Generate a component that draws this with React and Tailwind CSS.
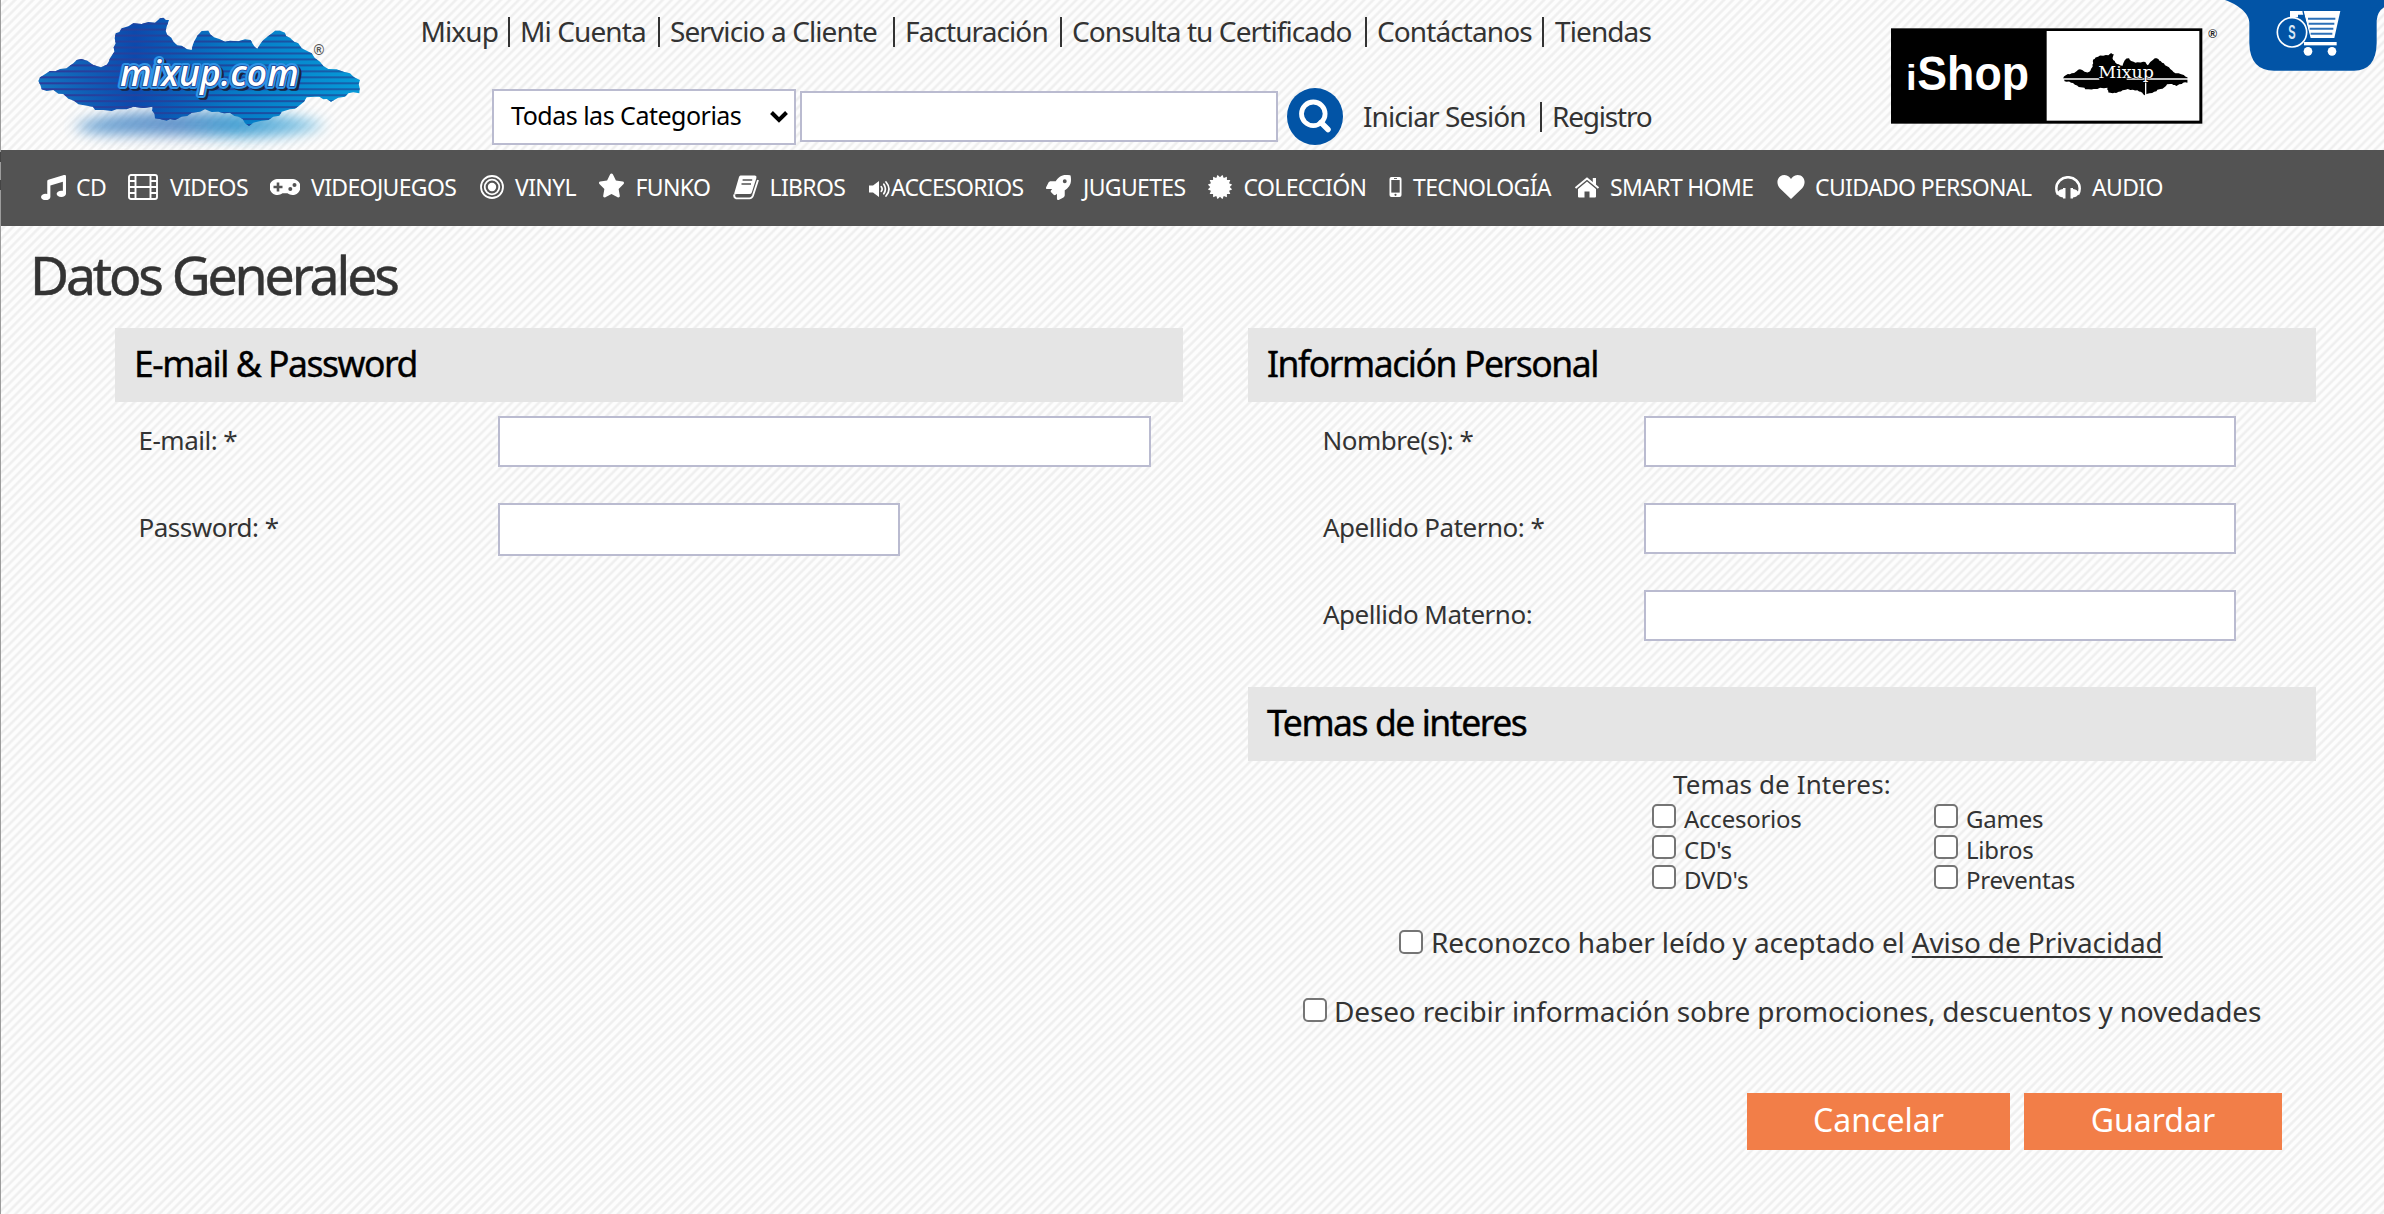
import React from "react";
import { FaRocket, FaStar, FaMusic } from "react-icons/fa";

const CLOUD =
  "M115 243 L120 232 131 225 150 213 166 214 180 207 199 205 220 190 230 180 244 177 262 182 280 195 303 202 320 194 326 185 330 175 343 155 341 142 347 130 344 115 347 100 358 96 365 85 385 79 400 70 425 72 445 66 465 68 480 55 490 53 498 60 507 60 500 80 497 92 502 105 514 113 520 125 532 136 545 137 560 147 575 150 579 133 585 120 592 107 605 93 625 92 632 104 642 112 660 118 675 125 690 122 715 124 735 118 752 120 757 130 765 142 772 146 780 133 790 120 800 112 812 103 825 92 840 92 855 98 858 108 870 113 882 125 895 130 905 145 935 160 945 175 960 185 970 198 985 207 1010 208 1030 215 1050 220 1062 232 1080 240 1076 252 1079 265 1078 280 1060 277 1045 280 1035 290 1015 293 993 305 980 297 970 298 958 290 945 290 920 292 912 305 900 315 885 326 870 328 845 335 838 347 820 350 805 360 785 362 760 368 747 378 735 370 728 357 715 350 703 348 690 338 672 340 655 335 635 336 615 328 600 335 575 338 562 348 545 350 525 360 510 357 500 362 480 357 465 355 463 340 456 332 458 320 430 324 400 320 380 328 350 328 335 333 310 330 285 330 279 320 265 318 235 313 222 302 205 296 190 282 175 281 160 270 140 273 125 268 121 255Z";

function MixupLogo() {
  return (
    <svg className="h-[150px] w-[400px] shrink-0" viewBox="0 0 1200 450">
      <defs>
        <linearGradient id="cloudFill" x1="0" x2="1">
          <stop offset="0" stopColor="#1474c0" />
          <stop offset=".3" stopColor="#0c49ac" />
          <stop offset=".6" stopColor="#0679c5" />
          <stop offset="1" stopColor="#069ad8" />
        </linearGradient>
        <linearGradient id="lineFill" x1="0" x2="1">
          <stop offset="0" stopColor="#2c3c9c" />
          <stop offset=".6" stopColor="#1d479d" />
          <stop offset="1" stopColor="#1465ae" />
        </linearGradient>
        <linearGradient id="glow" x1="0" x2="1">
          <stop offset="0" stopColor="#4f94cc" />
          <stop offset=".4" stopColor="#3f7cc0" />
          <stop offset=".65" stopColor="#1a8cca" />
          <stop offset="1" stopColor="#7cc4e6" />
        </linearGradient>
        <filter id="soft" x="-20%" y="-60%" width="140%" height="220%">
          <feGaussianBlur stdDeviation="20" />
        </filter>
        <clipPath id="cloudClip">
          <path d={CLOUD} />
        </clipPath>
      </defs>
      <path d="M220 380 Q300 340 460 335 L720 335 Q900 345 980 375 Q900 410 740 412 L400 405 Q260 405 220 380Z" fill="url(#glow)" filter="url(#soft)" opacity=".8" />
      <path d={CLOUD} fill="url(#cloudFill)" />
      <g clipPath="url(#cloudClip)" fill="url(#lineFill)">
        {Array.from({ length: 19 }, (_, i) => (
          <rect key={i} x="100" y={50 + i * 17.9} width="1000" height="6" />
        ))}
      </g>
      <g fontFamily="'Open Sans', 'Noto Sans', sans-serif" fontStyle="italic" fontWeight="600" fontSize="108">
        <text x="366" y="264" textLength="536" lengthAdjust="spacingAndGlyphs" fill="#1a2340" stroke="#1a2340" strokeWidth="17" strokeLinejoin="round">mixup.com</text>
        <text x="359" y="257" textLength="536" lengthAdjust="spacingAndGlyphs" fill="#2e93e6" stroke="#2e93e6" strokeWidth="18" strokeLinejoin="round">mixup.com</text>
        <text x="360" y="257" textLength="536" lengthAdjust="spacingAndGlyphs" fill="#fff" stroke="#1d3c8c" strokeWidth="5" paintOrder="stroke">mixup.com</text>
      </g>
      <text x="957" y="166" textAnchor="middle" fontFamily="'Liberation Sans', sans-serif" fontWeight="700" fontSize="42" fill="#555">®</text>
    </svg>
  );
}

function StoreBadges() {
  return (
    <svg className="h-[130px] w-[504px] shrink-0" viewBox="0 0 1512 390">
      <rect x="33" y="85" width="934" height="286" fill="#000" />
      <rect x="500" y="93" width="458" height="269" fill="#fff" />
      <g fontFamily="'Liberation Sans', sans-serif" fontWeight="700" fill="#fff">
        <text x="112" y="269" fontSize="146" textLength="335" lengthAdjust="spacingAndGlyphs">Shop</text>
        <text x="78" y="269" fontSize="106" textLength="32" lengthAdjust="spacingAndGlyphs">i</text>
      </g>
      <g transform="translate(505.5 139.4) scale(.3865 .388)">
        <path d={CLOUD} />
      </g>
      <path d="M550 237H658M740 237H923M797 210V285" stroke="#fff" strokeWidth="4" fill="none" />
      <text x="655" y="235" fontFamily="'DejaVu Serif', serif" fontSize="48" textLength="167" lengthAdjust="spacingAndGlyphs" fill="#fff" stroke="#000" strokeWidth="3" paintOrder="stroke">Mixup</text>
      <text x="998" y="114" textAnchor="middle" fontFamily="'Liberation Sans', sans-serif" fontWeight="700" fontSize="36" fill="#222">®</text>
      <path d="M1035 0C1070 12 1108 38 1108 68V130Q1110 212 1182 212H1422Q1488 212 1490 130V62Q1492 35 1512 22V0Z" fill="#0254a6" />
      <path d="M1230 33H1381L1363 114H1292L1273 44H1254V52H1230Z" fill="#fff" />
      <path d="M1269 33L1288 114 1276 126" stroke="#0254a6" strokeWidth="4" fill="none" />
      <path d="M1284 56H1366M1286 71H1363M1289 86H1360M1292 101H1357" stroke="#2c70b8" strokeWidth="6" />
      <rect x="1272" y="126" width="98" height="10" fill="#fff" />
      <circle cx="1284" cy="154" r="13" fill="#fff" />
      <circle cx="1356" cy="154" r="13" fill="#fff" />
      <circle cx="1236" cy="97" r="44" fill="#0254a6" stroke="#fff" strokeWidth="5" />
      <text x="1236" y="118" textAnchor="middle" fontFamily="'Liberation Sans', sans-serif" fontWeight="700" fontSize="58" textLength="22" lengthAdjust="spacingAndGlyphs" fill="#dbe8f5">S</text>
    </svg>
  );
}

const FilmIcon = () => (
  <svg className="h-[26px] w-[30px]" viewBox="0 0 30 26" fill="none" stroke="currentColor" strokeWidth="1.9">
    <rect x="1" y="1" width="28" height="24" rx="2" />
    <path d="M7.5 1V25M22.5 1V25M7.5 13H22.5M1 7H7.5M1 13H7.5M1 19H7.5M22.5 7H29M22.5 13H29M22.5 19H29" />
  </svg>
);
const GamepadIcon = () => (
  <svg className="h-[16px] w-[30px]" viewBox="0 0 30 16">
    <path fill="currentColor" d="M8 0H22A8 8 0 1 1 17.5 14.2H12.5A8 8 0 1 1 8 0Z" />
    <path d="M8 3.5V12.5M3.5 8H12.5" stroke="#535353" strokeWidth="2.6" />
    <circle cx="20.3" cy="10" r="2" fill="#535353" />
    <circle cx="24.5" cy="6" r="2" fill="#535353" />
  </svg>
);
const VinylIcon = () => (
  <svg className="size-[24px]" viewBox="0 0 24 24" fill="none" stroke="currentColor" strokeWidth="1.8">
    <circle cx="12" cy="12" r="11" />
    <circle cx="12" cy="12" r="7.3" />
    <circle cx="12" cy="12" r="4.2" fill="currentColor" stroke="none" />
  </svg>
);
const BookIcon = () => (
  <svg className="h-[25px] w-[26px]" viewBox="0 0 26 25" fill="none">
    <path fill="currentColor" d="M7.5 .5H22Q24 .8 23.4 3L18.8 17.5Q18.3 19 16.5 19H4Q2.2 19 1.6 20.3L1.2 18.5 6 2Q6.4 .7 7.5 .5Z" />
    <path d="M25 5L20 20.5Q19 23.3 16.5 23.4H3.2Q.6 22.6 1.4 19.5" stroke="currentColor" strokeWidth="1.9" />
    <path d="M9.6 5H19.2M8.5 9H18" stroke="#535353" strokeWidth="1.5" />
  </svg>
);
const VolumeIcon = () => (
  <svg className="mt-[3px] h-[16px] w-[22px]" viewBox="0 0 22 16" fill="none" stroke="currentColor" strokeWidth="1.7" strokeLinecap="round">
    <path fill="currentColor" stroke="none" d="M0 4.5H4L10 0V16L4 11.5H0Z" />
    <path d="M12.3 5.7Q14 8 12.3 10.3M14.8 3.2Q18 8 14.8 12.8M17 1Q23 8 17 15" />
  </svg>
);
const BADGE_POINTS = Array.from({ length: 32 }, (_, i) => {
  const a = (i * Math.PI) / 16;
  const r = i % 2 ? 12.4 : 9.8;
  return `${(12 + r * Math.sin(a)).toFixed(2)},${(12 - r * Math.cos(a)).toFixed(2)}`;
}).join(" ");
const BadgeIcon = () => (
  <svg className="size-[24px]" viewBox="0 0 24 24">
    <polygon points={BADGE_POINTS} fill="currentColor" />
  </svg>
);
const PhoneIcon = () => (
  <svg className="h-[20px] w-[13px]" viewBox="0 0 13 20">
    <rect x=".5" y="0" width="12" height="20" rx="2" fill="currentColor" />
    <rect x="2.3" y="3" width="8.4" height="12.6" fill="#535353" />
    <path d="M5 1.5H8" stroke="#535353" strokeWidth=".9" />
    <circle cx="6.5" cy="17.8" r="1.1" fill="#535353" />
  </svg>
);
const HomeIcon = () => (
  <svg className="h-[21px] w-[26px]" viewBox="0 0 26 21" fill="currentColor">
    <path d="M13 4.5L22 12V19.5Q22 20.5 21 20.5H15.5V14.5H10.5V20.5H5Q4 20.5 4 19.5V12Z" />
    <path d="M1.5 11L13 1.6 24.5 11" stroke="currentColor" strokeWidth="2" fill="none" />
    <path d="M18.8 1H22V9L18.8 6Z" />
  </svg>
);
const HeartIcon = () => (
  <svg className="h-[24px] w-[28px]" viewBox="0 0 28 24" fill="currentColor">
    <path d="M14 24L2.8 13.2C-1.5 8.5 0 0 7.5 0 11 0 13 2.4 14 4 15 2.4 17 0 20.5 0 28 0 29.5 8.5 25.2 13.2Z" />
  </svg>
);
const HeadphonesIcon = () => (
  <svg className="h-[23px] w-[26px]" viewBox="0 0 26 23" fill="none">
    <path d="M3 18.5Q1.3 16 1.3 12.5A11.7 11.3 0 0 1 24.7 12.5Q24.7 16 23 18.5" stroke="currentColor" strokeWidth="2.5" />
    <path fill="currentColor" d="M8 12H10.5V22.5H8V21.5Q3.2 21 2.5 17.2 3.2 13.4 8 13ZM18 12H15.5V22.5H18V21.5Q22.8 21 23.5 17.2 22.8 13.4 18 13Z" />
  </svg>
);

const TOP_LINKS = [
  ["Mixup", "w-[89.5px]"],
  ["Mi Cuenta", "w-[150px] pl-[10px]"],
  ["Servicio a Cliente", "w-[235px] pl-[10px]"],
  ["Facturación", "w-[167px] pl-[10px]"],
  ["Consulta tu Certificado", "w-[305px] pl-[10px]"],
  ["Contáctanos", "w-[177px] pl-[10px]"],
];

const CATEGORIES = [
  ["CD", <FaMusic className="size-[25px]" />, "w-[87px]", "w-[35px]"],
  ["VIDEOS", <FilmIcon />, "w-[142px]", "w-[42px]"],
  ["VIDEOJUEGOS", <GamepadIcon />, "w-[210px]", "w-[41px]"],
  ["VINYL", <VinylIcon />, "w-[119px]", "w-[35px]"],
  ["FUNKO", <FaStar className="-mx-[1px] mb-[3px] size-[27px]" />, "w-[134px]", "w-[36.5px]"],
  ["LIBROS", <BookIcon />, "w-[136px]", "w-[36.5px]"],
  ["ACCESORIOS", <VolumeIcon />, "w-[177px]", "w-[22px]"],
  ["JUGUETES", <FaRocket className="size-[25px]" />, "w-[162px]", "w-[37px]"],
  ["COLECCIÓN", <BadgeIcon />, "w-[181px]", "w-[35.5px]"],
  ["TECNOLOGÍA", <PhoneIcon />, "w-[185px]", "w-[24px]"],
  ["SMART HOME", <HomeIcon />, "w-[203px]", "w-[36px]"],
  ["CUIDADO PERSONAL", <HeartIcon />, "w-[278px]", "w-[38px]"],
  ["AUDIO", <HeadphonesIcon />, "w-[140px]", "w-[37px]"],
];

function SectionTitle({ children }) {
  return (
    <h2 className="flex h-[74px] items-center bg-[#e5e5e5] pb-[3px] pl-[19px] text-[35.5px] tracking-[-1.45px] text-black [-webkit-text-stroke:0.4px_black]">
      {children}
    </h2>
  );
}

function Field({ label, row, labelBox, input }) {
  return (
    <label className={`flex items-start ${row}`}>
      <span className={`shrink-0 text-[26px] leading-[50px] tracking-[-0.5px] ${labelBox}`}>{label}</span>
      <input className={`border-2 border-[#babbd0] bg-white outline-none ${input}`} />
    </label>
  );
}

function Box() {
  return <input type="checkbox" className="size-[24px] shrink-0 appearance-none rounded-[5px] border-2 border-[#757575] bg-white" />;
}

function Topic({ children }) {
  return (
    <label className="flex h-[30.5px] w-[282px] items-center">
      <Box />
      <span className="pl-[8px] pt-[6px] text-[24px] leading-[30px] tracking-[-0.25px]">{children}</span>
    </label>
  );
}

export default function App() {
  return (
    <div className="flex h-[1214px] w-[2384px] overflow-hidden bg-[repeating-linear-gradient(135deg,#fdfdfd_0px,#fdfdfd_2.2px,#efefef_3.8px,#efefef_4.8px,#fdfdfd_6.36px)] font-['Noto_Sans','Open_Sans',sans-serif] text-[#333]">
      <div className="relative z-10 -mr-px flex w-px shrink-0 flex-col bg-[#9c9c9c] pt-[152px]">
        <div className="h-[10px] bg-[#444]" />
        <div className="mt-[18px] h-[10px] bg-[#444]" />
      </div>
      <div className="flex w-full flex-col">
        <header className="flex h-[150px] shrink-0">
          <MixupLogo />
          <div className="w-[1480px] shrink-0 text-[28px] tracking-[-0.9px]">
            <nav className="flex h-[88px] pl-[20.5px] pt-[17px] leading-[28px]">
              {TOP_LINKS.map(([name, box]) => (
                <a key={name} className={`h-[30px] shrink-0 whitespace-nowrap border-r-2 border-[#333] ${box}`}>{name}</a>
              ))}
              <a className="pl-[11px]">Tiendas</a>
            </nav>
            <div className="flex items-start pl-[92px]">
              <button className="mt-[1px] flex h-[56px] w-[304px] items-center border-2 border-[#babbd0] bg-white pl-[17px] text-[25px] tracking-[-0.5px] text-black">
                <span className="w-[259px] pb-[2px] text-left">Todas las Categorias</span>
                <svg className="h-[12px] w-[18px]" viewBox="0 0 18 12" fill="none" stroke="#000" strokeWidth="4">
                  <path d="M1.5 1.5L9 9 16.5 1.5" />
                </svg>
              </button>
              <input className="ml-[4px] mt-[3px] h-[51px] w-[478px] border-2 border-[#babbd0] bg-white outline-none" />
              <svg className="ml-[9px] h-[57px] w-[56px]" viewBox="0 0 56 57" fill="none" stroke="#fff">
                <ellipse cx="28" cy="28.5" rx="28" ry="28.5" fill="#0254a6" stroke="none" />
                <circle cx="26.3" cy="25.8" r="11.8" strokeWidth="4.8" />
                <path d="M34 34.5L41 41.5" strokeWidth="5.5" strokeLinecap="round" />
              </svg>
              <div className="ml-[20px] mt-[14px] flex leading-[28px]">
                <a className="h-[30px] w-[179px] border-r-2 border-[#333]">Iniciar Sesión</a>
                <a className="pl-[10px] tracking-[-1.2px]">Registro</a>
              </div>
            </div>
          </div>
          <StoreBadges />
        </header>

        <nav className="flex h-[76px] shrink-0 items-center bg-[#535353] pb-[2px] pl-[41px] text-[23px] tracking-[-0.65px] text-white">
          {CATEGORIES.map(([name, icon, box, slot]) => (
            <a key={name} className={`flex shrink-0 items-center whitespace-nowrap ${box}`}>
              <span className={`shrink-0 ${slot}`}>{icon}</span>
              {name}
            </a>
          ))}
        </nav>

        <main className="flex flex-col">
          <h1 className="h-[102px] pl-[30px] pt-[9px] text-[53.5px] leading-[80px] tracking-[-3.1px] [-webkit-text-stroke:0.5px_#333]">Datos Generales</h1>
          <div className="flex pl-[115px]">
            <section className="mr-[65px] w-[1068px]">
              <SectionTitle>E-mail &amp; Password</SectionTitle>
              <Field label="E-mail: *" row="mt-[14px] h-[87px]" labelBox="w-[383px] pl-[23.5px] -mt-[1px]" input="h-[51px] w-[653px]" />
              <Field label="Password: *" row="h-[87px]" labelBox="w-[383px] pl-[23.5px] -mt-[1px]" input="h-[53px] w-[402px]" />
            </section>
            <section className="w-[1068px]">
              <SectionTitle>Información Personal</SectionTitle>
              <Field label="Nombre(s): *" row="mt-[14px] h-[87px]" labelBox="w-[396px] pl-[74.5px] -mt-[1px]" input="h-[51px] w-[592px]" />
              <Field label="Apellido Paterno: *" row="h-[87px]" labelBox="w-[396px] pl-[75px] -mt-[1px]" input="h-[51px] w-[592px]" />
              <Field label="Apellido Materno:" row="h-[97px]" labelBox="w-[396px] pl-[75px] -mt-[1px]" input="h-[51px] w-[592px]" />
              <SectionTitle>Temas de interes</SectionTitle>
              <p className="mt-[8px] pl-[425px] text-[26px] leading-[30px] tracking-[0.1px]">Temas de Interes:</p>
              <div className="mt-[2px] flex flex-wrap pl-[404px]">
                <Topic>Accesorios</Topic>
                <Topic>Games</Topic>
                <Topic>CD's</Topic>
                <Topic>Libros</Topic>
                <Topic>DVD's</Topic>
                <Topic>Preventas</Topic>
              </div>
              <label className="mt-[29px] flex h-[40px] items-center whitespace-nowrap pl-[151px] text-[28px] tracking-[-0.15px]">
                <Box />
                <span className="pl-[8px] pt-[1px]">
                  Reconozco haber leído y aceptado el <a className="underline decoration-2 underline-offset-[3px]">Aviso de Privacidad</a>
                </span>
              </label>
              <label className="mt-[28.5px] flex h-[40px] items-center whitespace-nowrap pl-[55px] text-[28px] tracking-[-0.17px]">
                <Box />
                <span className="pl-[7px] pt-[1px]">Deseo recibir información sobre promociones, descuentos y novedades</span>
              </label>
              <div className="mt-[62.5px] flex gap-[14px] pl-[499px] text-[32px] text-white">
                <button className="h-[57px] w-[263px] bg-[#f27e48] pb-[2px]">Cancelar</button>
                <button className="h-[57px] w-[258px] bg-[#f27e48] pb-[2px]">Guardar</button>
              </div>
            </section>
          </div>
        </main>
      </div>
    </div>
  );
}
